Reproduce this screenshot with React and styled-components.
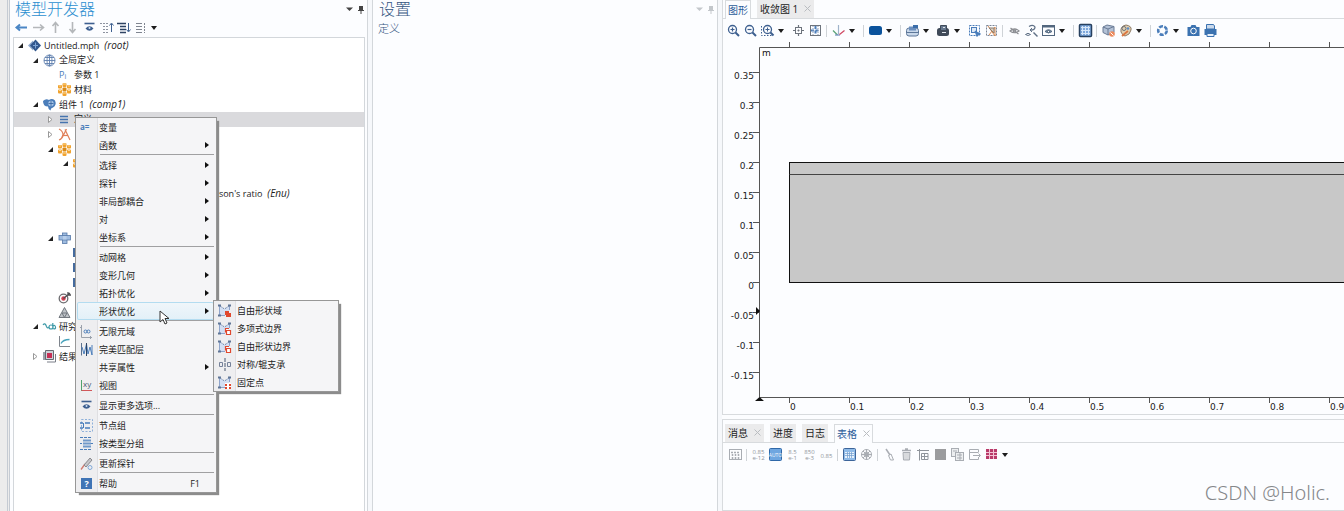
import React from 'react';
import styled, { createGlobalStyle, css } from 'styled-components';

const GlobalStyle = createGlobalStyle`
  * {
    box-sizing: border-box;
  }
  body {
    margin: 0;
    background: #fcfdff;
    color: #222;
    font-family: "Open Sans", "Noto Sans CJK SC", sans-serif;
    font-size: 9px;
  }
  ul {
    list-style: none;
    margin: 0;
    padding: 0;
  }
  button {
    font: inherit;
    color: inherit;
    border: 0;
    padding: 0;
    background: none;
  }
`;

// all icons are drawn on a 15 x 15 grid
const navy = '#3d5f8f';
const blue = '#4a7dba';
const gray = '#a9adb3';

const shapeBase = (
  <g>
    <path d="M3 3L7.500 6 12 3V8H8v4H3z" fill="#d3dff3" />
    <path d="M2.500 3v9 M12.500 3v4 M3 12.500h5" fill="none" stroke="#8fa5cc" />
    <path d="M1 1.500h3v2H1z M11 1.500h3v2h-3z M1 11.500h3v2H1z" fill="#5f7596" />
    <path d="M3 3l4.500 3L12 3" fill="none" stroke="#7389ab" strokeDasharray="2 1" />
  </g>
);

const material = (
  <g>
    <g fill="#f0a22e">
      <rect x="5.500" y="1" width="4" height="4" rx="1" />
      <rect x="1" y="3" width="4" height="3.500" rx="1" />
      <rect x="10" y="3" width="4" height="3.500" rx="1" />
      <rect x="1" y="7.500" width="4" height="4" rx="1" />
      <rect x="10" y="7.500" width="4" height="4" rx="1" />
      <rect x="5.500" y="10" width="4" height="4" rx="1" />
    </g>
    <rect x="5.500" y="5.500" width="4" height="4" rx="1" fill="#d98a18" />
    <path d="M6 2h3 M2 4h2 M11 4h2 M2 8.500h2 M11 8.500h2 M6 11h3" stroke="#fbd690" />
  </g>
);

const icons = {
  back: <path d="M13 7.500H3 M6 4.500l-3.500 3L6 10.500" fill="none" stroke="#4a86c5" strokeWidth="2" />,
  forward: <path d="M2 7.500h10 M9 4.500l3.500 3L9 10.500" fill="none" stroke="#b4b7ba" strokeWidth="1.600" />,
  up: <path d="M7.500 13V3 M4.500 6l3-3.500L10.500 6" fill="none" stroke="#b4b7ba" strokeWidth="1.600" />,
  down: <path d="M7.500 2v10 M4.500 9l3 3.500L10.500 9" fill="none" stroke="#b4b7ba" strokeWidth="1.600" />,
  show: (
    <g>
      <path d="M2.500 3.500h10" stroke={navy} strokeWidth="1.600" />
      <path d="M3.500 8.500Q7.500 4 11.500 8.500Q7.500 13 3.500 8.500Z" fill={navy} />
      <circle cx="7.500" cy="8" r="1" fill="#cfe0f4" />
    </g>
  ),
  collapse: (
    <g>
      <path d="M1 3.500h9 M4 6.500h6 M4 9.500h6 M4 12.500h6" stroke="#8d93a0" strokeDasharray="2 1" />
      <path d="M12.500 12V4 M10.500 5.500l2-2.500 2 2.500" fill="none" stroke={navy} />
    </g>
  ),
  expand: (
    <g>
      <path d="M1 3.500h9 M4 6.500h6 M4 9.500h6 M4 12.500h6" stroke="#2f4463" strokeWidth="1.300" />
      <path d="M12.500 3v8 M10.500 9.500l2 2.500 2-2.500" fill="none" stroke={navy} />
    </g>
  ),
  columns: (
    <g stroke="#7f8590" fill="none">
      <path d="M3 3.500h6 M3 6.500h6 M3 9.500h6 M3 12.500h6" />
      <path d="M11.500 3v10" strokeDasharray="2 1" />
    </g>
  ),
  root: (
    <g>
      <path d="M6 2.500L1 7.500l5 5z" fill="#8ea8cd" />
      <path d="M8.500 1.500L3 7.500l5.500 6L14 7.500z" fill="#33588e" />
      <path d="M8.500 4.500v6 M6 7.500h5" stroke="#7fa6d8" />
    </g>
  ),
  globe: (
    <g fill="none" stroke="#5f7fae" strokeWidth=".9">
      <circle cx="7.500" cy="7.500" r="5.500" />
      <ellipse cx="7.500" cy="7.500" rx="2.500" ry="5.500" />
      <path d="M2 7.500h11 M3 4.500h9 M3 10.500h9 M7.500 2v11" />
    </g>
  ),
  pi: (
    <text x="2" y="10" fontSize="9" fill={blue}>
      P<tspan fontSize="7" dy="1">i</tspan>
    </text>
  ),
  material,
  component: (
    <g>
      <path d="M1 4Q4 1 7 3Q10 1 13 3.500Q15 8 11 10.500Q8.500 11 8.500 13.500Q6 12 6 9.500Q1 9.500 1 4Z" fill={blue} />
      <circle cx="9" cy="6.500" r="2.700" fill="#a9c6e8" />
      <path d="M9 4v5 M6.500 6.500h5" stroke="#315f9c" strokeWidth=".8" />
    </g>
  ),
  lines: <path d="M3 4.500h8 M3 7.500h8 M3 10.500h8" stroke="#4674ae" strokeWidth="1.600" />,
  geometry: (
    <g fill="none" stroke="#e0805a" strokeWidth="1.200">
      <path d="M2 2Q6 4 6 8Q5 12 2 13 M8 2.500L13 13 M9.500 2L5 11" />
      <path d="M5 8.500h6" />
    </g>
  ),
  solid: (
    <g fill="#9fbce0" stroke="#5578a8" strokeWidth=".8">
      <rect x="5.500" y="2" width="4.500" height="10.500" />
      <rect x="2" y="4.500" width="11.500" height="4.500" />
      <path d="M6 5h3.500v3.500H6z" fill="#b8cfea" stroke="none" />
    </g>
  ),
  node: <rect x="1" y="3" width="10" height="9" fill="#456b9e" />,
  probe: (
    <g fill="none">
      <circle cx="6.500" cy="8.500" r="4.300" stroke="#6c6c70" strokeWidth="1.300" />
      <circle cx="6.500" cy="8.500" r="2.200" fill="#d23f52" />
      <path d="M6.500 8.500L13 3 M11 2v3h3" stroke="#4c4c50" strokeWidth="1.300" />
    </g>
  ),
  mesh: (
    <g fill="#bfc3c8" stroke="#676c74" strokeWidth=".9">
      <path d="M7.500 2.500L13 12.500H2z" />
      <path d="M5 8h5l-2.500 4.500z" />
    </g>
  ),
  study: (
    <path
      d="M1 6Q3 3 4.500 7.500Q5.500 10 7 8 M7 8a2 2 0 1 0 4 0a2 2 0 1 0-4 0 M10.800 4v5.500Q14 10.500 13.500 8Q13 5.500 11 7"
      fill="none"
      stroke="#3e9aa8"
      strokeWidth="1.200"
    />
  ),
  stationary: (
    <g fill="none">
      <path d="M2.500 2v10.500H13" stroke="#7e848c" />
      <path d="M4 9.500Q6 5.500 12.500 5.500" stroke="#46a2bb" strokeWidth="1.300" />
    </g>
  ),
  results: (
    <g>
      <path d="M1 3h8v8H1z" fill="#9ca0a8" />
      <path d="M3.500 1.500h8v9h-8z" fill="#cfd2d8" stroke="#666b74" />
      <rect x="5" y="4" width="5" height="5" fill="#c62f55" />
      <path d="M5 13h8.500V5" fill="none" stroke="#7a7f88" />
    </g>
  ),
  variable: (
    <text x="1" y="10" fontSize="8" fontWeight="700" fill={blue}>
      a=
    </text>
  ),
  infinite: (
    <g>
      <path d="M2.500 1v12.500H13 M1 3.500h1.500 M11.500 12v3" fill="none" stroke="#9aa1ab" />
      <circle cx="6.500" cy="7.500" r="1.500" fill="none" stroke={blue} />
      <circle cx="9.500" cy="7.500" r="1.500" fill="none" stroke={blue} />
    </g>
  ),
  pml: (
    <g fill="none">
      <path d="M2.500 1v12.500" stroke="#59708f" />
      <path d="M3 5l2 7 2.500-10L9 12l2-7 2 8V3" stroke={blue} />
      <path d="M7.500 1v13" stroke="#2e4464" />
    </g>
  ),
  view: (
    <g>
      <path d="M2.500 2v11" stroke="#4fa36e" />
      <path d="M2.500 12.500H13" stroke="#d2575a" />
      <text x="4" y="9" fontSize="8" fill="#4b5d77">
        xy
      </text>
    </g>
  ),
  nodeGroup: (
    <g fill="none" stroke={blue}>
      <rect x="2.500" y="1.500" width="11" height="12" strokeDasharray="2 1.500" stroke="#8fb1da" />
      <path d="M1 5h3 M1 10h3 M6 5h5 M6 10h5" strokeWidth="1.500" />
      <path d="M4.500 5v5" />
    </g>
  ),
  byType: (
    <g stroke={blue}>
      <path d="M1 1.500h12 M1 13.500h12" strokeDasharray="3 1" />
      <path d="M4 4.500h8 M4 7.500h8 M4 10.500h8" strokeWidth="2" stroke="#7199c9" />
      <path d="M1 7.500h2 M12 7.500h2" />
    </g>
  ),
  updateProbe: (
    <g fill="none">
      <path d="M2 13.500L6 8" stroke="#d07a70" strokeWidth="1.300" />
      <path d="M5 9L11 2l2 2-6 7z" stroke="#8a8a8e" fill="#c6c6ca" />
      <circle cx="11" cy="11.500" r="2" stroke="#7fa8d8" />
    </g>
  ),
  help: (
    <g>
      <rect x="2" y="2" width="11" height="11" fill="#3f74b5" />
      <text x="5.500" y="11" fontSize="9" fontWeight="700" fill="#fff">
        ?
      </text>
    </g>
  ),
  freeDomain: (
    <g>
      {shapeBase}
      <path d="M8 8h4v2h2v4H9v-2H8z" fill="#e0492f" />
    </g>
  ),
  boundary: (
    <g>
      {shapeBase}
      <path d="M8.500 11.500v-4h3.500 M9.500 9.500h4v4h-4z" fill="#fff" stroke="#e0492f" strokeWidth="1.200" />
    </g>
  ),
  symmetry: (
    <g fill="none" stroke="#76829a">
      <path d="M2.500 5.500h3v4h-3z M10.500 5.500h3v4h-3z" />
      <path d="M8 1v13" stroke="#4a5970" strokeDasharray="4 1" />
    </g>
  ),
  fixedPoint: (
    <g>
      {shapeBase}
      <path d="M8 8h6v6H8z" fill="#fff" />
      <path d="M8 9h2v2H8z M12 9h2v2h-2z M8 12h2v2H8z M12 12h2v2h-2z" fill="#e0492f" />
    </g>
  ),
  zoomIn: (
    <g fill="none" stroke={navy}>
      <circle cx="6.500" cy="6.500" r="4" strokeWidth="1.300" />
      <path d="M4.500 6.500h4 M6.500 4.500v4" strokeWidth="1.200" />
      <path d="M9.500 9.500l3.500 3.500" strokeWidth="2" />
    </g>
  ),
  zoomOut: (
    <g fill="none" stroke={navy}>
      <circle cx="6.500" cy="6.500" r="4" strokeWidth="1.300" />
      <path d="M4.500 6.500h4" strokeWidth="1.200" />
      <path d="M9.500 9.500l3.500 3.500" strokeWidth="2" />
    </g>
  ),
  zoomBox: (
    <g fill="none" stroke={navy}>
      <path d="M1.500 3v9.500h10" strokeDasharray="1.500 1.500" />
      <circle cx="7.500" cy="6.500" r="4" strokeWidth="1.300" />
      <path d="M5.500 6.500h4 M7.500 4.500v4" />
      <path d="M10.500 9.500l3 3" strokeWidth="2" />
    </g>
  ),
  zoomSelected: (
    <g fill="none" stroke="#6d737c">
      <rect x="4.500" y="4.500" width="6" height="6" />
      <path d="M7.500 2v3 M7.500 10v3 M2 7.500h3 M10 7.500h3 M6.500 7.500h2 M7.500 6.500v2" strokeWidth="1.200" />
    </g>
  ),
  zoomExtents: (
    <g fill="none">
      <rect x="2.500" y="2.500" width="10" height="10" stroke="#6d737c" />
      <path d="M7.500 3v9 M3 7.500h9" stroke={blue} strokeWidth="2" strokeDasharray="3 1.500" />
      <path d="M5 3v9 M10 3v9" stroke="#8d9cb2" strokeDasharray="1 1" />
    </g>
  ),
  axes: (
    <g fill="none" strokeWidth="1.200">
      <path d="M7.500 2v9" stroke="#9fb3ca" />
      <path d="M6.500 12L2 7.500" stroke="#5aa377" />
      <path d="M4 12h5" stroke="#6f8ec0" />
      <path d="M8.500 11.500l5-4" stroke="#cf4560" />
    </g>
  ),
  swatch: <rect x="1" y="3" width="13" height="9" rx="2.500" fill="#0b539c" />,
  sceneLight: (
    <g>
      <rect x="1.500" y="5" width="12" height="8" rx="2.500" fill="#c9d8ea" stroke="#5d7799" />
      <path d="M4 3.500h7v4H4z" fill="#6b8fbe" />
      <path d="M2 9.500h11" stroke="#5d7799" />
      <path d="M8 2h5v3H8z" fill="#3c6eaa" />
    </g>
  ),
  environment: (
    <g>
      <rect x="1" y="5" width="12" height="8" rx="2.500" fill="#3f4a59" />
      <path d="M4.500 2.500h6v5h-6z" fill="#66788f" stroke="#3f4a59" />
      <path d="M6 9.500h4 M7 4.500h2" stroke="#dfe5ec" />
    </g>
  ),
  selectBox: (
    <g fill="none" stroke={blue}>
      <rect x="2.500" y="2.500" width="10" height="10" strokeDasharray="2 1" />
      <rect x="4.500" y="4.500" width="5" height="5" fill="#dce8f6" />
      <path d="M8 8l5.500 3-2.500.5-1 2z" fill={blue} />
    </g>
  ),
  deselectBox: (
    <g fill="none">
      <rect x="2.500" y="2.500" width="10" height="10" stroke="#7a8596" strokeDasharray="2 1" />
      <path d="M4 3l7 10V4L5 12" stroke="#d6884f" />
      <path d="M5 5h5v5z" fill="#d9cdc0" stroke="#8b7d6f" />
    </g>
  ),
  hide: (
    <g fill="none" stroke="#8d8f94" strokeWidth="1.200">
      <path d="M3 8Q7.500 4 12 8Q7.500 11.500 3 8Z" />
      <circle cx="7.500" cy="8" r="1.200" />
      <path d="M3.500 5l8 6" />
    </g>
  ),
  reset: (
    <g fill="none" stroke="#5f7086">
      <path d="M5 3.500Q9 1 11 4Q11 7 7 7" strokeWidth="1.300" />
      <path d="M8 5L6 7l2 2" />
      <path d="M1.500 11.500Q4 9 6.500 11.500Q4 13.500 1.500 11.500Z" />
      <path d="M9.500 9.500l4 4" strokeWidth="1.500" />
    </g>
  ),
  viewWindow: (
    <g fill="none" stroke="#52677f">
      <rect x="1.500" y="2.500" width="12" height="10" />
      <path d="M1.500 3.500h12" strokeWidth="2" />
      <path d="M4 8.500Q7.500 5 11 8.500Q7.500 11.500 4 8.500Z" fill="#7c93ad" />
      <circle cx="7.500" cy="8.500" r="1" fill="#fff" />
    </g>
  ),
  grid: (
    <g>
      <rect x="1.500" y="1.500" width="12" height="12" rx="1" fill="#7da7dc" stroke="#27405f" strokeWidth="1.500" />
      <path d="M4.500 3v9 M7.500 3v9 M10.500 3v9 M3 4.500h9 M3 7.500h9 M3 10.500h9" stroke="#d6e6f8" />
    </g>
  ),
  cube: (
    <g>
      <path d="M2 4l4-2 7 1.500v6L7 12l-5-2.500z" fill="#b3c1d6" stroke="#697a95" />
      <path d="M2 4l5 2v6 M7 6l6-2.500" fill="none" stroke="#697a95" />
      <circle cx="11" cy="11" r="2.800" fill="#ec8a5d" />
      <path d="M9.500 9.500l3 3" stroke="#fff" />
    </g>
  ),
  palette: (
    <g>
      <path d="M3 9Q2 3 8 2Q14 3 13 7Q12 12 7 13Q5 13 3 9Z" fill="#e3cfae" stroke="#8d7b68" />
      <circle cx="6" cy="5.500" r="2" fill="none" stroke="#6a737f" />
      <circle cx="10" cy="5.500" r="1.300" fill="#5b8cc6" />
      <path d="M4 13l6-5" stroke="#db7641" strokeWidth="1.800" />
    </g>
  ),
  refresh: (
    <circle cx="7.500" cy="7.500" r="4.300" fill="none" stroke="#4a7dba" strokeWidth="2.600" strokeDasharray="4 1.400" />
  ),
  camera: (
    <g fill="#3b72b0">
      <path d="M1.500 4h3l1-2h4l1 2h3v9h-12z" />
      <circle cx="7.500" cy="8" r="2.800" fill="none" stroke="#fff" />
    </g>
  ),
  print: (
    <g fill="#3b72b0">
      <path d="M3.500 1.500h7l1 1.500V6h-8z" fill="#c9d9ec" stroke="#3b72b0" />
      <path d="M1.500 6h12v6h-12z" />
      <path d="M4 10.500h7v3H4z" fill="#e6effa" stroke="#3b72b0" />
    </g>
  ),
  tableSettings: (
    <g fill="none" stroke={gray}>
      <rect x="1.500" y="2.500" width="12" height="10" />
      <path d="M3 5.500h9 M4.500 7v5 M7.500 7v5 M10.500 7v5" strokeWidth="1.500" strokeDasharray="2 1" />
    </g>
  ),
  tableGrid: (
    <g>
      <rect x="1.500" y="1.500" width="12" height="12" rx="1" fill="#8fbbe8" stroke="#3d659a" />
      <rect x="3" y="5" width="9" height="6" fill="#e8f2fc" />
      <path d="M3 6.500h9 M3 8.500h9 M5.500 5v6 M7.500 5v6 M9.500 5v6" stroke="#6f9ccf" strokeWidth=".7" />
    </g>
  ),
  polar: (
    <g fill="none" stroke={gray}>
      <circle cx="7.500" cy="7.500" r="5" />
      <circle cx="7.500" cy="7.500" r="2.500" />
      <path d="M7.500 2v11 M2 7.500h11 M4 4l7 7 M11 4l-7 7" />
    </g>
  ),
  brush: (
    <g fill="none" stroke={gray}>
      <path d="M4 2l4 6" strokeWidth="1.500" />
      <path d="M6.500 8.500l2.500-1.500 2.500 6h-3z" />
    </g>
  ),
  trash: (
    <g fill="none" stroke={gray}>
      <path d="M3 3.500h9 M6 2h3" strokeWidth="1.300" />
      <path d="M4 5.500l.5 7.500h6l.5-7.500z" fill="#d8dadd" />
    </g>
  ),
  copyTable: (
    <g fill="none" stroke="#8f949b">
      <path d="M1 3.500h12 M3.500 2v11.500" />
      <path d="M5.500 6.500h6.500v6H5.500z M5.500 9.500h6.500 M8.500 6.500v6" />
    </g>
  ),
  fill: <rect x="2" y="2" width="11" height="11" fill="#9b9c9e" />,
  copy: (
    <g fill="#eceef0" stroke={gray}>
      <rect x="1.500" y="1.500" width="7" height="8" />
      <rect x="5.500" y="5.500" width="8" height="8" />
      <path d="M3 4h4 M7 8h5 M7 11h5 M10 6v7" />
    </g>
  ),
  exportTable: (
    <g fill="none" stroke={gray}>
      <path d="M11.500 5V2.500h-9v10h9V10" />
      <path d="M2.500 5.500h9 M6 8.500h7 M11.500 6.500l2 2-2 2" />
    </g>
  ),
  redTable: (
    <g>
      <rect x="2" y="2" width="11" height="10" fill="#b93a6a" />
      <path d="M5.500 2v10 M9.500 2v10 M2 5.500h11 M2 8.500h11" stroke="#f2c3d5" />
    </g>
  ),
};

// number format buttons carry two tiny rows of digits
const formats = {
  full: ['0.85', 'e-12'],
  eng: ['8.5', 'e-1'],
  sci: ['850', 'e-3'],
};
Object.keys(formats).forEach((key) => {
  icons[key] = (
    <g fill="#8f949b" fontSize="6" textAnchor="middle">
      <text x="7.500" y="7">{formats[key][0]}</text>
      <text x="7.500" y="13">{formats[key][1]}</text>
    </g>
  );
});
icons.decimal = (
  <text x="7.500" y="11" fontSize="6" textAnchor="middle" fill="#8f949b">
    0.85
  </text>
);
icons.auto = (
  <g>
    <rect x="1.500" y="1.500" width="12" height="12" rx="1" fill="#6fa6e0" stroke="#2f68a8" />
    <text x="7.500" y="10" fontSize="5" textAnchor="middle" fill="#f2f8ff">
      AUTO
    </text>
  </g>
);

const Glyph = styled.svg`
  display: block;
  flex: none;
  width: 15px;
  height: 15px;
  overflow: visible;
`;

const Icon = ({ name }) => (
  <Glyph viewBox="0 0 15 15" aria-hidden="true">
    {icons[name]}
  </Glyph>
);

const Window = styled.div`
  display: grid;
  grid-template-columns: 10px 358px 4px 346px 4px 1fr;
  min-height: 100vh;
  position: relative;
  overflow: hidden;
`;

const Gutter = styled.div`
  background: #ececec;
  border-right: 3px double #c5cbd3;
`;

const Splitter = styled.div`
  background: #f6f8fb;
`;

const Panel = styled.section`
  min-width: 0;
  padding: 0 2px 0 3px;
  border-right: 1px solid #d3d7db;
  border-left: ${(p) => (p.$open ? '0' : '1px solid #d3d7db')};
  display: flex;
  flex-direction: column;
`;

const PanelHead = styled.header`
  display: flex;
  align-items: center;
  height: 19px;
  padding: 0 0 0 ${(p) => p.$inset}px;
  color: ${(p) => p.$tone};
`;

const Title = styled.h2`
  flex: 1;
  margin: 0;
  font-size: 16px;
  line-height: 19px;
  font-weight: 300;
  color: ${(p) => p.$color};
`;

const SubTitle = styled.p`
  margin: 0;
  padding: 0 2px;
  font-size: 11px;
  line-height: 20px;
  font-weight: 300;
  color: #34557f;
`;

const HeadButton = styled.button`
  width: 11px;
  height: 11px;
  svg {
    display: block;
  }
`;

const Toolbar = styled.div`
  display: flex;
  align-items: center;
  height: ${(p) => p.$height}px;
  padding-left: ${(p) => p.$inset}px;
`;

const Tool = styled.button`
  display: flex;
  justify-content: center;
  width: 17px;
  height: 17px;
  align-items: center;
`;

const Drop = styled.button`
  width: 14px;
  height: 17px;
  padding-left: 2px;
  &::before {
    content: '';
    display: block;
    width: 0;
    border: 3px solid transparent;
    border-top: 4px solid #1c1c1c;
    border-bottom: 0;
  }
`;

const Divider = styled.span`
  width: 1px;
  height: 12px;
  margin: 0 3px 0 2px;
  background: #cfd3d7;
`;

const Tree = styled.ul`
  flex: 1;
  display: grid;
  grid-template-rows: repeat(22, 1fr);
  align-content: start;
  max-height: 328px;
`;

const TreeBox = styled.div`
  flex: 1;
  margin-top: 1px;
  border: 1px solid #d3d7db;
  border-bottom: 0;
  background: #fff;
  ul {
    height: 326px;
  }
`;

const Row = styled.li`
  display: flex;
  align-items: center;
  min-height: 0;
  line-height: 14px;
  white-space: nowrap;
  padding-left: ${(p) => p.$level * 15}px;
  background: ${(p) => (p.$selected ? '#dadadd' : 'transparent')};
`;

const Twist = styled.span`
  width: 13px;
  display: flex;
  justify-content: center;
  flex: none;
  svg {
    display: block;
  }
`;

const RowLabel = styled.span`
  padding-left: ${(p) => (p.$deep ? 7 : 2)}px;
`;

const Tag = styled.em`
  padding-left: 5px;
  font-size: 10px;
`;

const tree = [
  { level: 0, open: true, icon: 'root', label: 'Untitled.mph', tag: '(root)' },
  { level: 1, open: true, icon: 'globe', label: '全局定义' },
  { level: 2, icon: 'pi', label: '参数 1' },
  { level: 2, icon: 'material', label: '材料' },
  { level: 1, open: true, icon: 'component', label: '组件 1', tag: '(comp1)' },
  { level: 2, open: false, icon: 'lines', label: '定义', selected: true },
  { level: 2, open: false, icon: 'geometry' },
  { level: 2, open: true, icon: 'material' },
  { level: 3, open: true, icon: 'material' },
  { level: 4 },
  { level: 4, label: "Young's modulus and Poisson's ratio", tag: '(Enu)' },
  { level: 4 },
  { level: 4 },
  { level: 2, open: true, icon: 'solid' },
  { level: 3, icon: 'node' },
  { level: 3, icon: 'node' },
  { level: 3, icon: 'node' },
  { level: 2, icon: 'probe' },
  { level: 2, icon: 'mesh' },
  { level: 1, open: true, icon: 'study', label: '研究' },
  { level: 2, icon: 'stationary' },
  { level: 1, open: false, icon: 'results', label: '结果' },
];

const menuCss = css`
  position: absolute;
  z-index: 2;
  border: 1px solid #979797;
  background: linear-gradient(to right, #eeeef0 21px, #dfdfe2 21px, #dfdfe2 22px, #f5f5f7 22px);
  box-shadow: 3px 3px 1px -1px #8c8c8c;
`;

// the menus float over the window next to the tree
const ContextMenu = styled.ul`
  ${menuCss}
  left: 75px;
  top: 117px;
  width: 142px;
`;

const SubMenu = styled.ul`
  ${menuCss}
  left: 136px;
  top: -2px;
  width: 126px;
`;

const Item = styled.li`
  position: relative;
  height: 18px;
  margin: 0 2px 0 1px;
  border-radius: 2px;
  ${(p) =>
    p.$active &&
    css`
      background: linear-gradient(#f0f6fa, #e2f0f8);
      box-shadow: inset 0 0 0 1px #b3dcf0;
    `}
`;

const ItemButton = styled.button`
  display: flex;
  align-items: center;
  width: 100%;
  height: 18px;
  padding: 0 5px 0 2px;
  text-align: left;
  white-space: nowrap;
`;

const ItemIcon = styled.span`
  width: 20px;
  flex: none;
`;

const ItemText = styled.span`
  flex: 1;
`;

const Shortcut = styled.kbd`
  font: inherit;
  padding-right: 9px;
`;

const More = styled.i`
  border: 3px solid transparent;
  border-left: 4px solid #111;
  border-right: 0;
`;

const Rule = styled.li`
  height: 2px;
  margin: 0 2px 0 24px;
  border-top: 1px solid #a0a0a2;
`;

const shapeItems = [
  { icon: 'freeDomain', text: '自由形状域' },
  { icon: 'boundary', text: '多项式边界' },
  { icon: 'boundary', text: '自由形状边界' },
  { icon: 'symmetry', text: '对称/辊支承' },
  { icon: 'fixedPoint', text: '固定点' },
];

const menuGroups = [
  [{ icon: 'variable', text: '变量' }, { text: '函数', more: true }],
  [
    { text: '选择', more: true },
    { text: '探针', more: true },
    { text: '非局部耦合', more: true },
    { text: '对', more: true },
    { text: '坐标系', more: true },
  ],
  [
    { text: '动网格', more: true },
    { text: '变形几何', more: true },
    { text: '拓扑优化', more: true },
    { text: '形状优化', more: true, children: shapeItems },
  ],
  [
    { icon: 'infinite', text: '无限元域' },
    { icon: 'pml', text: '完美匹配层' },
    { text: '共享属性', more: true },
    { icon: 'view', text: '视图' },
  ],
  [{ icon: 'show', text: '显示更多选项...' }],
  [
    { icon: 'nodeGroup', text: '节点组' },
    { icon: 'byType', text: '按类型分组' },
  ],
  [{ icon: 'updateProbe', text: '更新探针' }],
  [{ icon: 'help', text: '帮助', shortcut: 'F1' }],
];

const Right = styled.main`
  min-width: 0;
  display: flex;
  flex-direction: column;
  gap: 4px;
`;

const Pane = styled.section`
  border: 1px solid #d8dbde;
  border-right: 0;
  border-top-width: ${(p) => (p.$first ? 0 : 1)}px;
  flex: ${(p) => (p.$first ? 'none' : 1)};
`;

const Tabs = styled.div`
  display: flex;
  align-items: flex-end;
  gap: 6px;
  height: ${(p) => p.$height}px;
  padding-left: 2px;
  border-bottom: 1px solid #d8dbde;
`;

const Tab = styled.button`
  display: flex;
  align-items: center;
  height: 18px;
  padding: 0 3px 2px;
  font-size: 10px;
  white-space: nowrap;
  background: #ebebec;
  svg {
    margin-left: 6px;
  }
  ${(p) =>
    p.$active &&
    css`
      height: 19px;
      margin-bottom: -1px;
      color: #2d5c9a;
      background: #fcfdff;
      border: 1px solid #d8dbde;
      border-bottom: 0;
      padding: 0 2px 2px;
    `}
`;

const Plot = styled.svg`
  display: block;
  width: 100%;
  height: 372px;
  font-family: "DejaVu Sans", sans-serif;
  font-size: 9px;
`;

const Watermark = styled.p`
  position: absolute;
  right: 14px;
  bottom: 4px;
  margin: 0;
  font-size: 20px;
  line-height: 28px;
  font-family: "Noto Sans", sans-serif;
  font-weight: 300;
  color: #85878a;
`;

const Cursor = styled.svg`
  position: absolute;
  z-index: 3;
  left: 159px;
  top: 310px;
`;

const Cross = () => (
  <svg width="7" height="7" viewBox="0 0 7 7" aria-hidden="true">
    <path d="M.5.5l6 6 M6.5.5l-6 6" stroke="#b9bcc0" />
  </svg>
);

const HeadControls = () => (
  <>
    <HeadButton aria-label="菜单">
      <svg width="11" height="11">
        <path d="M3 3.500h7L6.500 7z" fill="currentColor" />
      </svg>
    </HeadButton>
    <HeadButton aria-label="固定">
      <svg width="11" height="11">
        <path d="M5 2h4v4h1v1H4V6h1z M6.500 7h1v3h-1z" fill="currentColor" />
      </svg>
    </HeadButton>
  </>
);

// "v" is a drop-down arrow, "|" is a divider
const Tools = ({ items, ...rest }) => (
  <Toolbar {...rest}>
    {items.split(' ').map((name, i) => {
      if (name === '|') return <Divider key={i} />;
      if (name === 'v') return <Drop key={i} aria-label="更多" />;
      return (
        <Tool key={i} aria-label={name}>
          <Icon name={name} />
        </Tool>
      );
    })}
  </Toolbar>
);

const MenuItem = ({ item }) => (
  <Item $active={!!item.children}>
    <ItemButton>
      <ItemIcon>{item.icon && <Icon name={item.icon} />}</ItemIcon>
      <ItemText>{item.text}</ItemText>
      {item.shortcut && <Shortcut>{item.shortcut}</Shortcut>}
      {item.more && <More />}
    </ItemButton>
    {item.children && (
      <SubMenu>
        {item.children.map((child) => (
          <MenuItem key={child.text} item={child} />
        ))}
      </SubMenu>
    )}
  </Item>
);

const xTicks = ['0', '0.1', '0.2', '0.3', '0.4', '0.5', '0.6', '0.7', '0.8', '0.9'];
const yTicks = ['0.35', '0.3', '0.25', '0.2', '0.15', '0.1', '0.05', '0', '-0.05', '-0.1', '-0.15'];

const Graph = () => (
  <Plot role="img" aria-label="图形">
    <rect x="66.500" y="120.500" width="100%" height="120" fill="#c8c8c8" stroke="#111" />
    <path d="M66.500 132.500H4000" stroke="#444" />
    <path d="M4000 5.500H36.500V355.500H4000" fill="none" stroke="#555" />
    {xTicks.map((t, i) => (
      <g key={t}>
        <path d={`M${66.5 + i * 60} 0v5 M${66.5 + i * 60} 355v6`} stroke="#555" />
        <text x={67 + i * 60} y="368" fill="#222">{t}</text>
      </g>
    ))}
    {yTicks.map((t, i) => (
      <g key={t}>
        <path d={`M30 ${30.5 + i * 30}h6`} stroke="#555" />
        <text x="31" y={37 + i * 30} textAnchor="end" fill="#222">{t}</text>
      </g>
    ))}
    <text x="39" y="14" fill="#111">m</text>
    <path d="M33 265l4 4-4 4z M32 359l4.500-4 4.500 4z" fill="#111" />
  </Plot>
);

const App = () => {
  return (
    <>
      <GlobalStyle />
      <Window>
        <Gutter />
        <Panel $open>
          <PanelHead $inset={2} $tone="#444">
            <Title $color="#2b8fd0">模型开发器</Title>
            <HeadControls />
          </PanelHead>
          <Tools $height={17} $inset={0} items="back forward up down show collapse expand columns v" />
          <TreeBox>
            <Tree>
              {tree.map((row, i) => (
                <Row key={i} $level={row.level} $selected={row.selected}>
                  <Twist>
                    {row.open === true && (
                      <svg width="5" height="5">
                        <path d="M5 0v5H0z" fill="#222" />
                      </svg>
                    )}
                    {row.open === false && (
                      <svg width="5" height="7">
                        <path d="M.5.5l3.500 3-3.500 3z" fill="#fff" stroke="#999" />
                      </svg>
                    )}
                  </Twist>
                  <Icon name={row.icon} />
                  {row.label && (
                    <RowLabel $deep={row.level > 3}>
                      {row.label}
                      {row.tag && <Tag>{row.tag}</Tag>}
                    </RowLabel>
                  )}
                </Row>
              ))}
            </Tree>
          </TreeBox>
        </Panel>
        <Splitter />
        <Panel>
          <PanelHead $inset={3} $tone="#c3c7cb">
            <Title $color="#34557f">设置</Title>
            <HeadControls />
          </PanelHead>
          <SubTitle>定义</SubTitle>
        </Panel>
        <Splitter />
        <Right>
          <Pane $first>
            <Tabs $height={19}>
              <Tab $active>图形</Tab>
              <Tab>
                收敛图 1<Cross />
              </Tab>
            </Tabs>
            <Tools
              $height={23}
              $inset={2}
              items="zoomIn zoomOut zoomBox v zoomSelected zoomExtents | axes v | swatch v | sceneLight v environment v selectBox deselectBox | hide reset viewWindow v | grid | cube palette v | refresh v camera print"
            />
            <Graph />
          </Pane>
          <Pane>
            <Tabs $height={23}>
              <Tab>
                消息
                <Cross />
              </Tab>
              <Tab>进度</Tab>
              <Tab>日志</Tab>
              <Tab $active>
                表格
                <Cross />
              </Tab>
            </Tabs>
            <Tools
              $height={23}
              $inset={4}
              items="tableSettings | full auto eng sci decimal | tableGrid polar | brush trash copyTable fill copy exportTable redTable v"
            />
          </Pane>
        </Right>
        <ContextMenu>
          {menuGroups.map((group, g) => (
            <React.Fragment key={g}>
              {g > 0 && <Rule />}
              {group.map((item) => (
                <MenuItem key={item.text} item={item} />
              ))}
            </React.Fragment>
          ))}
        </ContextMenu>
        <Cursor width="11" height="16" viewBox="0 0 11 16">
          <path d="M1 1v11l3-2.500 2 4.500 2-1-2-4.500h4z" fill="#fff" stroke="#333" />
        </Cursor>
        <Watermark>CSDN @Holic.</Watermark>
      </Window>
    </>
  );
};

export default App;
